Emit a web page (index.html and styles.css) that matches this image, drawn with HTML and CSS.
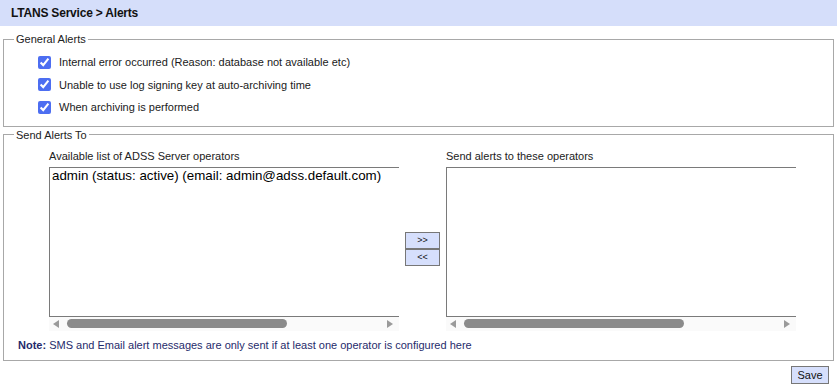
FILE: index.html
```html
<!DOCTYPE html>
<html lang="en">
<head>
  <meta charset="UTF-8">
  <title>LTANS Service - Alerts</title>
  <link rel="stylesheet" href="styles.css">
</head>
<body>

  <div class="page-title">LTANS Service &gt; Alerts</div>

  <fieldset class="group">
    <legend>General Alerts</legend>
    <label class="check-row"><input type="checkbox" checked> Internal error occurred (Reason: database not available etc)</label>
    <label class="check-row"><input type="checkbox" checked> Unable to use log signing key at auto-archiving time</label>
    <label class="check-row"><input type="checkbox" checked> When archiving is performed</label>
  </fieldset>

  <fieldset class="group send-group">
    <legend>Send Alerts To</legend>
    <div class="picker">
      <div class="picker-label">Available list of ADSS Server operators</div>
      <div></div>
      <div class="picker-label">Send alerts to these operators</div>

      <div class="listbox-wrap">
        <div class="listbox">
          <div class="listbox-option">admin (status: active) (email: admin@adss.default.com)</div>
        </div>
        <div class="hscroll">
          <span class="arrow arrow-left"></span>
          <span class="thumb"></span>
          <span class="arrow arrow-right"></span>
        </div>
      </div>

      <div class="move-buttons">
        <button class="btn btn-move">&gt;&gt;</button>
        <button class="btn btn-move">&lt;&lt;</button>
      </div>

      <div class="listbox-wrap">
        <div class="listbox"></div>
        <div class="hscroll">
          <span class="arrow arrow-left"></span>
          <span class="thumb"></span>
          <span class="arrow arrow-right"></span>
        </div>
      </div>
    </div>
    <div class="note"><b>Note:</b> SMS and Email alert messages are only sent if at least one operator is configured here</div>
  </fieldset>

  <div class="actions">
    <button class="btn btn-save">Save</button>
  </div>

</body>
</html>
```

FILE: styles.css
```css
body {
  font-family: 'Liberation Sans', Arial, sans-serif;
  font-size: 11px;
  color: #1a1a1a;
  background: #fff;
  margin: 0;
}
.page-title {
  height: 26px;
  line-height: 27px;
  padding-left: 11px;
  background: #d5defa;
  font-weight: bold;
  font-size: 12px;
  letter-spacing: -0.2px;
  color: #111;
}
.group {
  margin: 6px 3px 0;
  padding: 5px 10px 7px;
  border: 1px solid #a8a8a8;
}
.group legend {
  padding: 0 2px;
  line-height: 14px;
  color: #222;
}
.check-row {
  display: flex;
  align-items: center;
  height: 22.5px;
  padding-left: 24px;
}
.check-row input {
  width: 13px;
  height: 13px;
  margin: 0 8px 0 0;
  accent-color: #4d6ef1;
}
.send-group {
  margin-top: 1px;
  padding: 7px 10px 8px;
}
.picker {
  display: grid;
  grid-template-columns: 350px 35px 350px;
  column-gap: 6px;
  margin-left: 35px;
}
.picker-label {
  line-height: 14px;
  padding-bottom: 4px;
  color: #222;
}
.listbox-wrap {
  width: 350px;
  overflow: hidden;
}
.listbox {
  width: 420px;
  height: 148px;
  border: 1px solid #7a7a7a;
  background: #fff;
}
.listbox-option {
  font-size: 13.33px;
  line-height: 16px;
  padding-left: 2px;
  color: #000;
  white-space: nowrap;
}
.hscroll {
  display: flex;
  align-items: center;
  height: 14px;
  background: #fafafa;
}
.arrow {
  width: 0;
  height: 0;
  border-top: 4px solid transparent;
  border-bottom: 4px solid transparent;
}
.arrow-left {
  margin-left: 4px;
  border-right: 6px solid #9a9a9a;
}
.arrow-right {
  margin-left: auto;
  margin-right: 6px;
  border-left: 6px solid #9a9a9a;
}
.thumb {
  width: 220px;
  height: 9px;
  margin-left: 8px;
  border-radius: 5px;
  background: #8b8b8b;
}
.move-buttons {
  display: flex;
  flex-direction: column;
  align-self: center;
}
.btn {
  font-family: 'Liberation Sans', Arial, sans-serif;
  border: 1px solid #777;
  background: #d6dffc;
  color: #111;
  padding: 0;
  cursor: pointer;
}
.btn-move {
  width: 35px;
  height: 17px;
  font-size: 9px;
}
.note {
  margin-top: 7px;
  line-height: 14px;
  padding-left: 4px;
  color: #1f2b6b;
}
.actions {
  display: flex;
  justify-content: flex-end;
  padding: 5px 8px 0 0;
}
.btn-save {
  width: 38px;
  height: 18px;
  font-size: 11px;
}
```
